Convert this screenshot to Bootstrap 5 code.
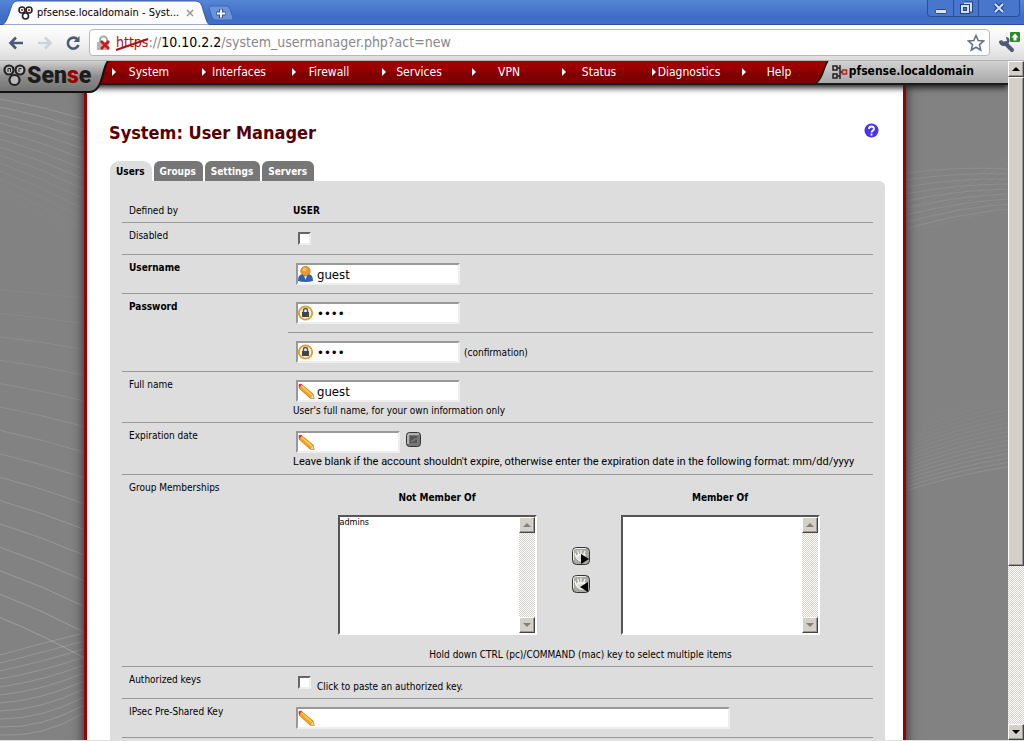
<!DOCTYPE html>
<html lang="en">
<head>
<meta charset="utf-8">
<meta name="viewport" content="width=device-width, initial-scale=1">
<title>pfsense.localdomain - System: User Manager</title>
<link rel="stylesheet" href="https://cdn.jsdelivr.net/npm/bootstrap@5.3.0/dist/css/bootstrap.min.css">
<style>
  :root { --ui: "DejaVu Sans Condensed", "DejaVu Sans", sans-serif; --brand-red: #900; --face: #d4d0c8; }
  body { font-family: var(--ui); font-size: 10px; line-height: 13px; color: #000; background: var(--face); }
  button { font: inherit; color: inherit; background: none; border: 0; padding: 0; line-height: 0; }
  svg { display: block; flex: none; }

  /* window frame */
  .titlebar { height: 25px; padding-left: 2px; background: linear-gradient(#5585d4, #3f6dc6 70%, #4170c9); border-bottom: 1px solid #2c4f99; }
  .win-tab { width: 208px; height: 25px; margin-bottom: -1px; }
  .win-tab-bg { inset: 0; }
  .win-tab-body { padding: 4px 12px 0 16px; font-size: 11px; line-height: 17px; }
  .new-tab { margin: 5px 0 0 -2px; }
  .win-buttons { height: 17px; margin-right: 4px; border: 1px solid #2b4f96; border-top: 0; border-radius: 0 0 4px 4px; background: #4776cc; }
  .win-buttons button { width: 25px; display: grid; place-items: center; }
  .win-buttons button + button { border-left: 1px solid #2b4f96; }
  .win-buttons button:last-child { width: 41px; }
  .toolbar { height: 36px; padding: 0 4px 0 8px; background: linear-gradient(#fff, #f2f2f2 50%, #dcdcdc); border-bottom: 1px solid #b4b4b4; }
  .address { height: 27px; padding: 0 4px 0 6px; background: #fff; border: 1px solid #b8b8b8; border-radius: 4px; }
  .address input { border: 0; outline: 0; background: none; font-size: 14px; color: #808080; width: 60px; }
  .address span { font-size: 14px; color: #888; white-space: nowrap; }
  .address .bad { color: #b01010; }
  .address .strike { left: 0; top: 0; }

  /* page */
  .page { background: #828282; overflow: hidden; }
  .curves { inset: 0; }
  .curves svg { position: absolute; top: 0; bottom: 0; }
  .sheet { margin: 0 102px 0 84px; padding: 35px 18px 0 22px; background: #fff; border: solid var(--brand-red); border-width: 0 3px; box-shadow: 0 0 10px 1px #333; }
  .masthead { height: 24px; background: linear-gradient(#a00000, #960000 45%, #800000 55%, #800000); border-bottom: 2px solid #1b1b1b; box-shadow: 0 3px 6px #222; z-index: 2; }
  .logo { width: 109px; height: 33px; }
  .logo-text { left: 27px; top: 3px; font: 900 23px/24px Roboto, sans-serif; color: #1c1c1c; }
  .logo-text b { color: #900; font-weight: 900; }
  .menu { margin: 0 -9px 0 -5px; }
  .menu a { width: 90px; height: 22px; line-height: 22px; font-size: 12px; color: #fff; text-align: center; text-decoration: none; }
  .menu svg { left: 8px; top: 7px; }
  .hostbar { height: 22px; }
  .hostname { padding-right: 34px; background: linear-gradient(#d2d2d2, #a8a8a8); font-size: 12px; font-weight: bold; line-height: 20px; }
  h1 { margin: 0; font-size: 18px; line-height: 26px; font-weight: bold; color: #500; }
  .help { margin: 3px 6px 0 0; }

  .tab-strip { gap: 2px; margin: 15px 0 0; padding-left: 1px; }
  .tab-strip a { height: 20px; padding: 0 7px 0 6px; line-height: 21px; font-weight: bold; color: #fff; background: #777; border-radius: 6px 6px 0 0; text-decoration: none; }
  .tab-strip a.on { color: #000; background: #ddd; border-radius: 9px 9px 0 0; }
  .panel { margin-left: 1px; padding: 17px 12px 0; background: #ddd; border-radius: 0 6px 0 0; }
  .line { border-bottom: 1px solid #999; }
  .key { flex: none; width: 166px; padding: 6px 7px 0; }
  .val { padding: 6px 5px 5px; }
  .val.entry { padding: 8px 5px; }
  .val.wide { padding-bottom: 5px; }
  .val.tick { padding: 9px 5px; }
  .val.tick.labelled { padding-bottom: 5px; }
  .val.tick.labelled label { padding: 4px 0 0 6px; }
  .field { margin-left: 3px; width: 164px; }
  .field.short { width: 104px; }
  .field.long { width: 434px; }
  .field svg { left: 2px; top: 3px; }
  .field input { display: block; width: 100%; height: 22px; padding: 0 2px 0 19px; border: 2px solid; border-color: #999 #eee #eee #999; background: #fff; font-size: 13px; line-height: 17px; outline: 0; }
  .box { appearance: none; display: block; width: 13px; height: 13px; margin: 0 0 0 5px; background: #fff; border: 2px solid; border-color: #666 #eee #eee #666; }
  .calendar { margin-left: 6px; padding-top: 1px; }
  .note { margin-top: 2px; }
  .note.format { font: 11px/14px Roboto, sans-serif; }

  .members { padding-right: 4px; }
  .inset-box { width: 199px; height: 120px; border: 2px solid; border-color: #555 #fff #fff #555; background: #fff; }
  .inset-box select { flex: 1; min-width: 0; border: 0; padding: 0; outline: 0; background: #fff; overflow: hidden; font-size: 9px; line-height: 11px; border-radius: 0; }
  .inset-box option { padding: 0; min-height: 0; }
  .mover { width: 84px; gap: 10px; padding-top: 14px; }
  .heading { margin-bottom: 11px; font-weight: bold; text-align: center; }
  .hint { padding-top: 13px; }
  .scroll { width: 16px; background: repeating-conic-gradient(#fff 0 25%, var(--face) 0 50%) 0 0 / 2px 2px; }
  .scroll button, .thumb { width: 16px; height: 16px; background: var(--face); border: 1px solid; border-color: #fff #444 #444 #fff; display: grid; place-items: center; box-shadow: inset -1px -1px #999; }
  .scroll .thumb { height: 72%; }
</style>
</head>
<body>
<div class="vh-100 d-flex flex-column overflow-hidden">

  <header class="titlebar d-flex flex-shrink-0">
    <div class="win-tab position-relative">
      <svg class="win-tab-bg position-absolute" width="208" height="25"><path d="M0 25 C4 23 5 19 7 14 C10 5 10 2 15 1 H194 C200 2 200 7 202 13 C204 19 205 24 208 25Z" fill="#fbfbfb" stroke="#36599f"/></svg>
      <div class="win-tab-body position-relative d-flex align-items-center">
        <svg width="15" height="17" fill="#fff" stroke="#222" stroke-width="1.6"><circle cx="4" cy="6" r="3"/><circle cx="11" cy="6" r="3"/><circle cx="7.500" cy="12" r="3"/><path d="M4 5v2M11 5v2" stroke="#b00"/></svg>
        <span class="flex-fill text-nowrap ps-1">pfsense.localdomain - Syst...</span>
        <button class="me-1" aria-label="Close tab"><svg width="8" height="8" stroke="#999" stroke-width="1.600"><path d="M1 1l6 6M7 1l-6 6"/></svg></button>
      </div>
    </div>
    <button class="new-tab align-self-start" aria-label="New tab"><svg width="26" height="16"><path d="M3 1H19Q21 1 22 4L25 13Q25 15 23 15H8Q5 15 4 12L1 3Q1 1 3 1Z" fill="#6c93da" stroke="#3e67b4"/><path d="M13 4v9M8.500 8.500h9" stroke="#2e5096" stroke-width="4"/><path d="M13 4.500v8M9 8.500h8" stroke="#fff" stroke-width="2"/></svg></button>
    <div class="win-buttons d-flex ms-auto">
      <button aria-label="Minimize"><svg width="14" height="13"><rect x="1.500" y="7.500" width="11" height="4" rx="1" fill="#d4e1f8" stroke="#2c4a88"/></svg></button>
      <button aria-label="Restore"><svg width="14" height="14" fill="none"><path d="M5 2.500h7v7h-3" stroke="#22427f" stroke-width="4"/><path d="M5 2.500h7v7h-3" stroke="#d4e1f8" stroke-width="2"/><rect x="3" y="5" width="6" height="6" stroke="#22427f" stroke-width="4"/><rect x="3" y="5" width="6" height="6" stroke="#d4e1f8" stroke-width="2"/></svg></button>
      <button aria-label="Close"><svg width="12" height="12"><path d="M2 2l8 8M10 2l-8 8" stroke="#22427f" stroke-width="4"/><path d="M2 2l8 8M10 2l-8 8" stroke="#d4e1f8" stroke-width="2"/></svg></button>
    </div>
  </header>

  <div class="toolbar d-flex align-items-center flex-shrink-0">
    <button aria-label="Back"><svg width="17" height="16" fill="none" stroke="#4c5a78" stroke-width="2.600"><path d="M15 8H3M8 2.500L2.500 8L8 13.500"/></svg></button>
    <button class="ms-2 ps-1" aria-label="Forward"><svg width="16" height="16" fill="none" stroke="#cfd2d8" stroke-width="2.600"><path d="M1 8H13M8 2.500L13.500 8L8 13.500"/></svg></button>
    <button class="ms-2 ps-1" aria-label="Reload"><svg width="16" height="16" fill="none" stroke="#4c5a78" stroke-width="2.600"><path d="M12.500 4.500A5.500 5.500 0 1 0 13.500 10"/><path d="M14.500 1v6h-6z" fill="#4c5a78" stroke="none"/></svg></button>
    <div class="address d-flex align-items-center flex-fill ms-2">
      <svg width="16" height="16"><path d="M4 8V5a3.500 3.500 0 0 1 7 0v3" fill="none" stroke="#aaa" stroke-width="2"/><rect x="1" y="7" width="12" height="8" fill="#b5b5b5"/><path d="M5 6l8 8M13 6l-8 8" stroke="#d01818" stroke-width="2.600"/></svg>
      <span class="position-relative ps-1"><span class="bad">https</span><svg class="strike position-absolute" width="38" height="18"><path d="M4 14L36 3" stroke="#b01010" stroke-width="2"/></svg></span><span>://</span><span class="text-black">10.10.2.2</span><span>/system_usermanager.php?act=new</span>
      <input type="text" class="flex-fill" aria-label="Address">
      <button aria-label="Bookmark"><svg width="18" height="18" fill="#fff" stroke="#66728c" stroke-width="1.600"><path d="M9 1.500l2.200 5 5.300.5-4 3.600 1.200 5.400L9 13.200 4.300 16l1.200-5.400-4-3.600 5.300-.5z"/></svg></button>
    </div>
    <button class="ms-2" aria-label="Settings"><svg width="22" height="22"><path d="M7 11l7 7" stroke="#4c5a78" stroke-width="4" stroke-linecap="round"/><path d="M1 9c0 5 5 6 8 4 4-3 3-8-1-8l1 4-3 2-2-3z" fill="#4c5a78"/><rect x="12" y="0" width="10" height="10" rx="1" fill="#2c8a2c"/><path d="M17 1.500l3.500 4h-2v3h-3v-3h-2z" fill="#fff"/></svg></button>
  </div>

  <div class="d-flex flex-fill overflow-hidden border-bottom">
    <main class="page flex-fill position-relative">
      <div class="curves position-absolute" aria-hidden="true">
        <svg id="left-curves" class="start-0" width="84" height="680" fill="none"></svg>
        <svg id="right-curves" class="end-0" width="102" height="680" fill="none"></svg>
      </div>

      <div class="masthead position-relative d-flex">
        <a class="logo position-relative" href="#" aria-label="pfSense">
          <svg width="109" height="33"><defs><linearGradient id="steel" x2="0" y2="1"><stop stop-color="#d0d0d0"/><stop offset=".5" stop-color="#8d8d8d"/><stop offset="1" stop-color="#727272"/></linearGradient></defs><path d="M0 0H108C103 6 103 20 98 26Q95 31 89 31H0Z" fill="url(#steel)"/><path d="M108 0C103 6 103 20 98 26Q95 31 89 31H0" fill="none" stroke="#111" stroke-width="2"/><g fill="#bbb" stroke="#222" stroke-width="2.200"><circle cx="9" cy="9" r="4.500"/><circle cx="20" cy="9" r="4.500"/><circle cx="14.500" cy="19" r="5"/></g><path d="M8 11V7.500h2.500V11M19 11V7.500h2.500" fill="none" stroke="#222"/></svg>
          <span class="logo-text position-absolute">Sen<b>s</b>e</span>
        </a>
        <nav class="menu d-flex flex-fill">
          <a class="position-relative" href="#"><svg class="position-absolute" width="5" height="8" fill="#fff"><path d="M0 0l4 4-4 4z"/></svg>System</a>
          <a class="position-relative" href="#"><svg class="position-absolute" width="5" height="8" fill="#fff"><path d="M0 0l4 4-4 4z"/></svg>Interfaces</a>
          <a class="position-relative" href="#"><svg class="position-absolute" width="5" height="8" fill="#fff"><path d="M0 0l4 4-4 4z"/></svg>Firewall</a>
          <a class="position-relative" href="#"><svg class="position-absolute" width="5" height="8" fill="#fff"><path d="M0 0l4 4-4 4z"/></svg>Services</a>
          <a class="position-relative" href="#"><svg class="position-absolute" width="5" height="8" fill="#fff"><path d="M0 0l4 4-4 4z"/></svg>VPN</a>
          <a class="position-relative" href="#"><svg class="position-absolute" width="5" height="8" fill="#fff"><path d="M0 0l4 4-4 4z"/></svg>Status</a>
          <a class="position-relative" href="#"><svg class="position-absolute" width="5" height="8" fill="#fff"><path d="M0 0l4 4-4 4z"/></svg>Diagnostics</a>
          <a class="position-relative" href="#"><svg class="position-absolute" width="5" height="8" fill="#fff"><path d="M0 0l4 4-4 4z"/></svg>Help</a>
        </nav>
        <div class="hostbar position-relative d-flex flex-shrink-0">
          <svg width="15" height="22"><defs><linearGradient id="plate" x2="0" y2="1"><stop stop-color="#d2d2d2"/><stop offset="1" stop-color="#a8a8a8"/></linearGradient></defs><path d="M12 0H15V22H0C8 17 7 6 12 0Z" fill="url(#plate)"/><path d="M12 0C7 6 8 17 0 22" fill="none" stroke="#111" stroke-width="1.500"/></svg>
          <div class="hostname d-flex align-items-start">
            <svg class="mt-1" width="18" height="14" fill="none" stroke="#222" stroke-width="1.500"><rect x="2" y="1" width="4" height="4"/><rect x="2" y="9" width="4" height="4"/><path d="M6 3h2.500M6 11h2.500M9 0v14M9 7h3"/><rect x="11.500" y="5" width="4" height="4" stroke="#b22"/></svg>
            <span>pfsense.localdomain</span>
          </div>
        </div>
      </div>

      <div class="sheet position-relative">
        <div class="d-flex justify-content-between align-items-start">
          <h1>System: User Manager</h1>
          <a href="#" aria-label="Help" class="help"><svg width="15" height="15"><circle cx="7.500" cy="7.500" r="7" fill="#4733f5"/><path d="M5 6Q5 3.500 7.500 3.500T10 6C10 7.500 7.500 7.500 7.500 9.500M7.500 10.500v2" fill="none" stroke="#fff" stroke-width="1.800"/></svg></a>
        </div>
        <nav class="tab-strip d-flex">
          <a class="on" href="#">Users</a><a href="#">Groups</a><a href="#">Settings</a><a href="#">Servers</a>
        </nav>
        <form class="panel">
          <div class="line d-flex"><div class="key">Defined by</div><div class="val"><strong>USER</strong></div></div>
          <div class="line d-flex"><label class="key" for="disabled">Disabled</label><div class="val tick"><input class="box" type="checkbox" id="disabled"></div></div>
          <div class="line d-flex"><label class="key fw-bold" for="username">Username</label><div class="val entry"><div class="field position-relative"><input id="username" type="text" value="guest"><svg class="position-absolute" width="15" height="16"><path d="M0 15Q0 8 5 8h5q5 0 5 7-3 1-7.500 1T0 15Z" fill="#2f62ab"/><path d="M5.500 8h4L7.500 14Z" fill="#dce8f6"/><circle cx="7.500" cy="5" r="4.600" fill="#e69a2e" stroke="#c97f1c"/><circle cx="6.500" cy="3.500" r="2" fill="#f7bf66"/></svg></div></div></div>
          <div class="line d-flex">
            <label class="key fw-bold" for="password">Password</label>
            <div class="flex-fill">
              <div class="val entry line"><div class="field position-relative"><input id="password" type="password" value="pass"><svg class="position-absolute" width="16" height="16"><circle cx="7.500" cy="8" r="6.700" fill="#eee" stroke="#d9a325" stroke-width="1.800"/><path d="M5.500 8V5.500a2 2 0 0 1 4 0V8" fill="none" stroke="#555" stroke-width="1.400"/><rect x="4" y="7" width="7" height="5" fill="#444"/></svg></div></div>
              <div class="val entry d-flex align-items-center"><div class="field position-relative"><input id="confirm" type="password" value="pass"><svg class="position-absolute" width="16" height="16"><circle cx="7.500" cy="8" r="6.700" fill="#eee" stroke="#d9a325" stroke-width="1.800"/><path d="M5.500 8V5.500a2 2 0 0 1 4 0V8" fill="none" stroke="#555" stroke-width="1.400"/><rect x="4" y="7" width="7" height="5" fill="#444"/></svg></div><label class="ps-1" for="confirm">(confirmation)</label></div>
            </div>
          </div>
          <div class="line d-flex"><label class="key" for="fullname">Full name</label><div class="val entry wide"><div class="field position-relative"><input id="fullname" type="text" value="guest"><svg class="position-absolute" width="17" height="16"><use href="#pencil"/></svg></div><div class="note">User's full name, for your own information only</div></div></div>
          <div class="line d-flex"><label class="key" for="expires">Expiration date</label><div class="val entry wide"><div class="d-flex"><div class="field short position-relative"><input id="expires" type="text"><svg class="position-absolute" width="17" height="16"><use href="#pencil"/></svg></div><button class="calendar align-self-start" type="button" aria-label="Pick a date"><svg width="15" height="15"><rect x=".5" y=".5" width="14" height="14" rx="3" fill="#777" stroke="#333"/><path d="M2 12V3q0-1 1-1h10" fill="none" stroke="#eee"/><rect x="4" y="4" width="7" height="7" fill="#555"/><path d="M5 9h3V7h3" fill="none" stroke="#888"/></svg></button></div><div class="note format">Leave blank if the account shouldn't expire, otherwise enter the expiration date in the following format: mm/dd/yyyy</div></div></div>
          <div class="line d-flex">
            <div class="key">Group Memberships</div>
            <div class="val flex-fill pt-3">
              <div class="members d-flex justify-content-center">
                <div><label class="heading d-block" for="not-member">Not Member Of</label>
                  <div class="inset-box d-flex"><select id="not-member" multiple size="8"><option>admins</option></select>
                    <div class="scroll d-flex flex-column justify-content-between"><button type="button" aria-label="Scroll up"><svg width="8" height="4" fill="#808080"><path d="M0 4l4-4 4 4z"/></svg></button><button type="button" aria-label="Scroll down"><svg width="8" height="4" fill="#808080"><path d="M0 0l4 4 4-4z"/></svg></button></div></div></div>
                <div class="mover d-flex flex-column align-items-center justify-content-center ps-1">
                  <button type="button" aria-label="Add to group"><svg width="18" height="18"><use href="#hand"/><path d="M9 7l8 5-8 5z"/></svg></button>
                  <button type="button" aria-label="Remove from group"><svg width="18" height="18"><use href="#hand"/><path d="M16 7l-8 5 8 5z"/></svg></button>
                </div>
                <div><label class="heading d-block" for="member">Member Of</label>
                  <div class="inset-box d-flex"><select id="member" multiple size="8"></select>
                    <div class="scroll d-flex flex-column justify-content-between"><button type="button" aria-label="Scroll up"><svg width="8" height="4" fill="#808080"><path d="M0 4l4-4 4 4z"/></svg></button><button type="button" aria-label="Scroll down"><svg width="8" height="4" fill="#808080"><path d="M0 0l4 4 4-4z"/></svg></button></div></div></div>
              </div>
              <div class="hint text-center">Hold down CTRL (pc)/COMMAND (mac) key to select multiple items</div>
            </div>
          </div>
          <div class="line d-flex"><label class="key" for="authkeys">Authorized keys</label><div class="val tick labelled d-flex"><input class="box" type="checkbox" id="authkeys"><label for="authkeys">Click to paste an authorized key.</label></div></div>
          <div class="line d-flex"><label class="key" for="psk">IPsec Pre-Shared Key</label><div class="val entry"><div class="field long position-relative"><input id="psk" type="text"><svg class="position-absolute" width="17" height="16"><use href="#pencil"/></svg></div></div></div>
          <div class="line d-flex py-4"></div>
        </form>
      </div>
    </main>
    <div class="scroll d-flex flex-column flex-shrink-0">
      <button aria-label="Page up"><svg width="8" height="4"><path d="M0 4l4-4 4 4z"/></svg></button>
      <div class="thumb"></div>
      <button class="mt-auto" aria-label="Page down"><svg width="8" height="4"><path d="M0 0l4 4 4-4z"/></svg></button>
    </div>
  </div>
</div>

<svg class="position-absolute" width="0" height="0" aria-hidden="true">
  <symbol id="pencil" viewBox="0 0 17 16" overflow="visible"><path d="M3 1L15 11L16 15.500L12 15L1 5Z" fill="#f6a11c" stroke="#c8750f" stroke-width=".8"/><path d="M3.500 3L14 12.500" stroke="#ffd35a" stroke-width="1.500"/><path d="M1 5L4 1Q1 0 .5 2Z" fill="#e8284a"/><path d="M12 15l3-4 1.200 4.700z" fill="#f3d9ab" stroke="#b98a4a" stroke-width=".5"/></symbol>
  <symbol id="hand" viewBox="0 0 18 18"><rect x=".5" y=".5" width="17" height="17" rx="4" fill="#a9aba2" stroke="#333"/><path d="M1.500 13V4q0-2.500 3-2.500h9" fill="none" stroke="#eee"/><path d="M4 10L3 6M7 8L5.500 3.500M9 8V3M11.500 8L13 4M4 10q3 5 8 4l1-6H6z" stroke="#f4f4f0" fill="#dcddd6" stroke-width="1.300"/></symbol>
</svg>

<script src="https://cdn.jsdelivr.net/npm/bootstrap@5.3.0/dist/js/bootstrap.bundle.min.js"></script>
<script>
  // Backdrop: families of thin curves sweeping across both margins.
  function sweep(id, count, curve) {
    const svg = document.getElementById(id);
    for (let i = 0; i < count; i++) {
      const c = curve(i), p = document.createElementNS('http://www.w3.org/2000/svg', 'path');
      p.setAttribute('d', `M0 ${c[0]} Q${c[3]} ${c[1]} ${c[3] * 2} ${c[2]}`);
      p.setAttribute('stroke', '#fff');
      p.setAttribute('stroke-opacity', c[4]);
      svg.appendChild(p);
    }
  }
  sweep('left-curves', 15, i => [229 + 23.4 * i, 232 + 24.4 * i, 237 + 25.7 * i, 42, 0.05 + i * 0.013]);
  sweep('left-curves', 13, i => [38 + 8 * i, 45 + 9 * i, 58 + 10 * i, 42, 0.16 - i * 0.011]);
  sweep('left-curves', 11, i => [594 + 8 * i, 582 + 9.5 * i, 572 + 8 * i, 42, 0.17]);
  sweep('right-curves', 9, i => [112 + 7 * i, 105 + 6 * i, 108 + 5 * i, 51, 0.09]);
  sweep('right-curves', 8, i => [142 + 4 * i, 130 + 4.5 * i, 95 + 7 * i, 51, 0.04]);
  sweep('right-curves', 18, i => [365 + 3.8 * i, 342 + 4.2 * i, 331 + 4.4 * i, 51, 0.01 + i * 0.006]);
</script>
</body>
</html>
